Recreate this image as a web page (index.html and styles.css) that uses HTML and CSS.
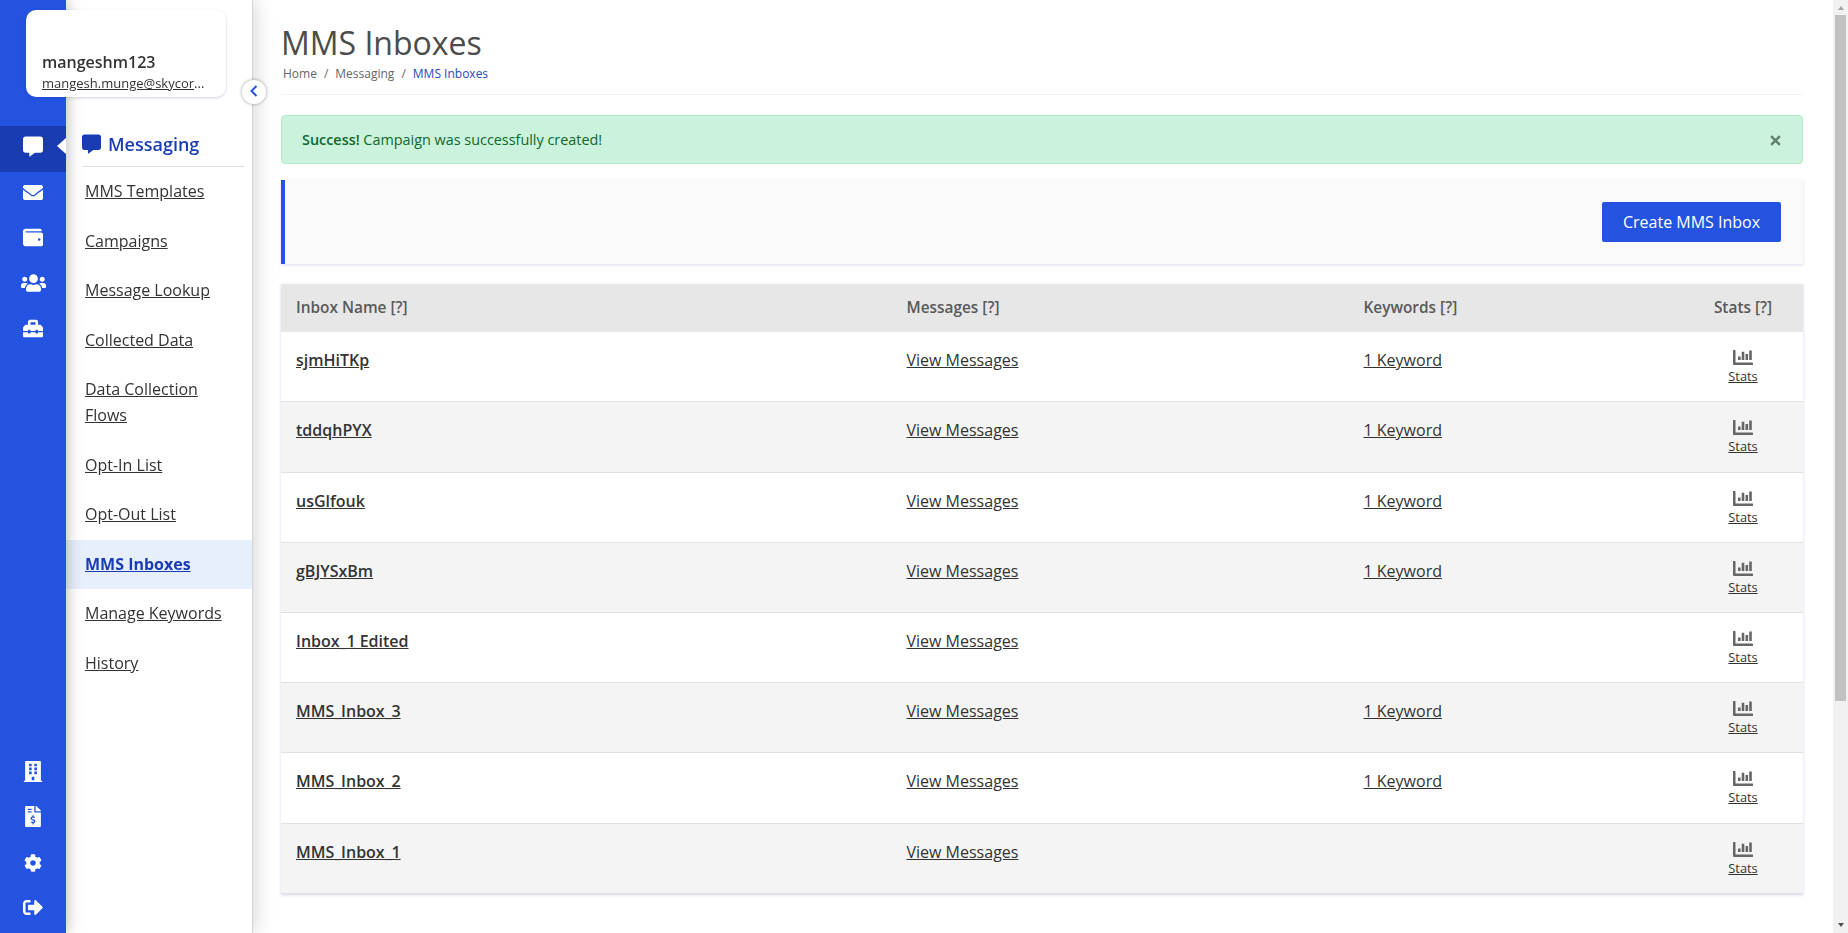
FILE: index.html
```html
<!DOCTYPE html>
<html lang="en">
<head>
<meta charset="utf-8">
<title>MMS Inboxes</title>
<link rel="stylesheet" href="styles.css">
</head>
<body>
<svg class="sprite" aria-hidden="true">
  <symbol id="message" viewBox="0 0 512 512"><path d="M448 0H64C28.7 0 0 28.7 0 64v288c0 35.3 28.7 64 64 64h96v84c0 9.8 11.2 15.5 19.1 9.7L304 416h144c35.3 0 64-28.7 64-64V64c0-35.3-28.7-64-64-64z"/></symbol>
  <symbol id="envelope" viewBox="0 0 512 512"><path d="M502.3 190.8c3.9-3.1 9.7-.2 9.7 4.7V400c0 26.5-21.5 48-48 48H48c-26.5 0-48-21.5-48-48V195.6c0-5 5.7-7.8 9.7-4.7 22.4 17.4 52.1 39.5 154.1 113.6 21.1 15.4 56.7 47.8 92.2 47.6 35.7.3 72-32.8 92.3-47.6 102-74.1 131.6-96.3 154-113.7zM256 320c23.2.4 56.6-29.2 73.4-41.4 132.7-96.3 142.8-104.7 173.4-128.7 5.8-4.5 9.2-11.5 9.2-18.9v-19c0-26.5-21.5-48-48-48H48c-26.5 0-48 21.5-48 48v19c0 7.4 3.4 14.3 9.2 18.9 30.6 23.9 40.7 32.4 173.4 128.7 16.8 12.2 50.2 41.8 73.4 41.4z"/></symbol>
  <symbol id="wallet" viewBox="0 0 512 512"><path d="M461.2 128H80c-8.84 0-16-7.16-16-16s7.16-16 16-16h384c8.84 0 16-7.16 16-16 0-26.51-21.49-48-48-48H64C28.65 32 0 60.65 0 96v320c0 35.35 28.65 64 64 64h397.2c28.02 0 50.8-21.53 50.8-48V176c0-26.47-22.78-48-50.8-48zM416 336c-17.67 0-32-14.33-32-32s14.33-32 32-32 32 14.33 32 32-14.33 32-32 32z"/></symbol>
  <symbol id="users" viewBox="0 0 640 512"><path d="M96 224c35.3 0 64-28.7 64-64s-28.7-64-64-64-64 28.7-64 64 28.7 64 64 64zm448 0c35.3 0 64-28.7 64-64s-28.7-64-64-64-64 28.7-64 64 28.7 64 64 64zm32 32h-64c-17.6 0-33.5 7.1-45.1 18.6 40.3 22.1 68.9 62 75.1 109.4h66c17.7 0 32-14.3 32-32v-32c0-35.3-28.7-64-64-64zm-256 0c61.9 0 112-50.1 112-112S381.9 32 320 32 208 82.1 208 144s50.1 112 112 112zm76.8 32h-8.3c-20.8 10-43.9 16-68.5 16s-47.6-6-68.5-16h-8.3C179.6 288 128 339.6 128 403.2V432c0 26.5 21.5 48 48 48h288c26.5 0 48-21.5 48-48v-28.8c0-63.6-51.6-115.2-115.2-115.2zm-223.7-13.4C161.5 263.1 145.6 256 128 256H64c-35.3 0-64 28.7-64 64v32c0 17.7 14.3 32 32 32h65.9c6.3-47.4 34.9-87.3 75.2-109.4z"/></symbol>
  <symbol id="toolbox" viewBox="0 0 512 512"><path d="M502.63 214.63l-45.25-45.25c-6-6-14.14-9.37-22.63-9.37H384V80c0-26.51-21.49-48-48-48H176c-26.51 0-48 21.49-48 48v80H77.25c-8.49 0-16.62 3.37-22.63 9.37L9.37 214.63c-6 6-9.37 14.14-9.37 22.63V320h128v-16c0-8.84 7.16-16 16-16h32c8.84 0 16 7.16 16 16v16h128v-16c0-8.84 7.16-16 16-16h32c8.84 0 16 7.16 16 16v16h128v-82.75c0-8.48-3.37-16.62-9.37-22.62zM320 160H192V96h128v64zm64 208c0 8.84-7.16 16-16 16h-32c-8.84 0-16-7.16-16-16v-16H192v16c0 8.84-7.16 16-16 16h-32c-8.84 0-16-7.16-16-16v-16H0v96c0 17.67 14.33 32 32 32h448c17.67 0 32-14.33 32-32v-96H384v16z"/></symbol>
  <symbol id="building" viewBox="0 0 448 512"><path fill-rule="evenodd" d="M436 480h-20V24c0-13.255-10.745-24-24-24H56C42.745 0 32 10.745 32 24v456H12c-6.627 0-12 5.373-12 12v20h448v-20c0-6.627-5.373-12-12-12zM128 64h64v64h-64zM256 64h64v64h-64zM128 160h64v64h-64zM256 160h64v64h-64zM128 256h64v64h-64zM256 256h64v64h-64zM192 384h64v88h-64z"/></symbol>
  <symbol id="invoice" viewBox="0 0 384 512"><path d="M377 105L279.1 7c-4.5-4.5-10.6-7-17-7H256v128h128v-6.1c0-6.3-2.5-12.4-7-16.9zm-153 31V0H24C10.7 0 0 10.7 0 24v464c0 13.3 10.7 24 24 24h336c13.3 0 24-10.7 24-24V160H248c-13.2 0-24-10.8-24-24zM64 72c0-4.42 3.58-8 8-8h80c4.42 0 8 3.58 8 8v16c0 4.42-3.58 8-8 8H72c-4.42 0-8-3.58-8-8V72zm0 80v-16c0-4.42 3.58-8 8-8h80c4.42 0 8 3.58 8 8v16c0 4.42-3.58 8-8 8H72c-4.42 0-8-3.58-8-8zm144 263.88V440c0 4.42-3.58 8-8 8h-16c-4.42 0-8-3.58-8-8v-24.29c-11.29-.58-22.27-4.52-31.37-11.35-3.9-2.93-4.1-8.77-.57-12.14l11.75-11.21c2.77-2.64 6.89-2.76 10.13-.73 3.87 2.42 8.26 3.72 12.82 3.72h28.11c6.5 0 11.8-5.92 11.8-13.19 0-5.95-3.61-11.19-8.77-12.73l-45-13.5c-18.59-5.58-31.58-23.42-31.58-43.39 0-24.52 19.05-44.44 42.67-45.07V232c0-4.42 3.58-8 8-8h16c4.42 0 8 3.58 8 8v24.29c11.29.58 22.27 4.51 31.37 11.35 3.9 2.93 4.1 8.77.57 12.14l-11.75 11.21c-2.77 2.64-6.89 2.76-10.13.73-3.87-2.43-8.26-3.72-12.82-3.72h-28.11c-6.5 0-11.8 5.92-11.8 13.19 0 5.95 3.61 11.19 8.77 12.73l45 13.5c18.59 5.58 31.58 23.42 31.58 43.39 0 24.53-19.05 44.44-42.67 45.07z"/></symbol>
  <symbol id="cog" viewBox="0 0 512 512"><path d="M487.4 315.7l-42.6-24.6c4.3-23.2 4.3-47 0-70.2l42.6-24.6c4.9-2.8 7.1-8.6 5.5-14-11.1-35.6-30-67.8-54.7-94.6-3.8-4.1-10-5.1-14.8-2.3L380.8 110c-17.9-15.4-38.5-27.3-60.8-35.1V25.8c0-5.6-3.9-10.5-9.4-11.7-36.7-8.2-74.3-7.8-109.2 0-5.5 1.2-9.4 6.1-9.4 11.7V75c-22.2 7.9-42.8 19.8-60.8 35.1L88.7 85.5c-4.9-2.8-11-1.9-14.8 2.3-24.7 26.7-43.6 58.9-54.7 94.6-1.7 5.4.6 11.2 5.5 14L67.3 221c-4.3 23.2-4.3 47 0 70.2l-42.6 24.6c-4.9 2.8-7.1 8.6-5.5 14 11.1 35.6 30 67.8 54.7 94.6 3.8 4.1 10 5.1 14.8 2.3l42.6-24.6c17.9 15.4 38.5 27.3 60.8 35.1v49.2c0 5.6 3.9 10.5 9.4 11.7 36.7 8.2 74.3 7.8 109.2 0 5.5-1.2 9.4-6.1 9.4-11.7v-49.2c22.2-7.9 42.8-19.8 60.8-35.1l42.6 24.6c4.9 2.8 11 1.9 14.8-2.3 24.7-26.7 43.6-58.9 54.7-94.6 1.5-5.5-.7-11.3-5.6-14.1zM256 336c-44.1 0-80-35.9-80-80s35.9-80 80-80 80 35.9 80 80-35.9 80-80 80z"/></symbol>
  <symbol id="logout" viewBox="0 0 512 512"><path d="M497 273L329 441c-15 15-41 4.5-41-17v-96H152c-13.3 0-24-10.7-24-24v-96c0-13.3 10.7-24 24-24h136V88c0-21.4 25.9-32 41-17l168 168c9.3 9.4 9.3 24.6 0 34zM192 436v-40c0-6.6-5.4-12-12-12H96c-17.7 0-32-14.3-32-32V160c0-17.7 14.3-32 32-32h84c6.600 0 12-5.400 12-12V76c0-6.600-5.400-12-12-12H96c-53 0-96 43-96 96v192c0 53 43 96 96 96h84c6.600 0 12-5.400 12-12z"/></symbol>
  <symbol id="chart" viewBox="0 0 20 15"><path d="M0 .5Q0 0 .5 0H2Q2.5 0 2.5.5V12.500H19.500Q20 12.500 20 13V14.500Q20 15 19.500 15H1Q0 15 0 14zM5 6.500h2.600v3.500H5zM8.700 1.800h2.600v8.200H8.700zM12.500 4h2.600v6h-2.600zM16.200 .5h2.600v9.500h-2.600z"/></symbol>
</svg>
<div class="app">
  <nav class="rail">
    <div class="rail-group">
      <a class="rail-item active"><svg><use href="#message"/></svg></a>
      <a class="rail-item"><svg><use href="#envelope"/></svg></a>
      <a class="rail-item raised"><svg><use href="#wallet"/></svg></a>
      <a class="rail-item"><svg class="wide"><use href="#users"/></svg></a>
      <a class="rail-item"><svg><use href="#toolbox"/></svg></a>
    </div>
    <div class="rail-group">
      <a class="rail-item"><svg><use href="#building"/></svg></a>
      <a class="rail-item"><svg><use href="#invoice"/></svg></a>
      <a class="rail-item lowered"><svg class="cog"><use href="#cog"/></svg></a>
      <a class="rail-item"><svg><use href="#logout"/></svg></a>
    </div>
  </nav>
  <aside class="panel">
    <h2 class="panel-title"><svg><use href="#message"/></svg>Messaging</h2>
    <ul class="menu">
      <li><a>MMS Templates</a></li>
      <li><a>Campaigns</a></li>
      <li><a>Message Lookup</a></li>
      <li><a>Collected Data</a></li>
      <li><a>Data Collection Flows</a></li>
      <li><a>Opt-In List</a></li>
      <li><a>Opt-Out List</a></li>
      <li class="current"><a>MMS Inboxes</a></li>
      <li><a>Manage Keywords</a></li>
      <li><a>History</a></li>
    </ul>
  </aside>
  <div class="account">
    <strong>mangeshm123</strong>
    <div class="mail"><a>mangesh.munge@skycor</a>...</div>
  </div>
  <button class="collapse"><svg viewBox="0 0 8 12"><path d="M6.500 1L1.500 6l5 5"/></svg></button>
  <main class="main">
    <h1>MMS Inboxes</h1>
    <div class="crumbs"><span>Home</span><i>/</i><span>Messaging</span><i>/</i><span class="here">MMS Inboxes</span></div>
    <div class="alert"><p><b>Success!</b> Campaign was successfully created!</p><svg class="close" viewBox="0 0 10 10"><path d="M1 1l8 8M9 1L1 9"/></svg></div>
    <div class="toolbar"><button class="create">Create MMS Inbox</button></div>
    <table class="inboxes">
      <colgroup><col class="c1"><col class="c2"><col class="c3"><col></colgroup>
      <thead><tr><th>Inbox Name [?]</th><th>Messages [?]</th><th>Keywords [?]</th><th class="stat">Stats [?]</th></tr></thead>
      <tbody>
        <tr><td class="name"><a>sjmHiTKp</a></td><td><a>View Messages</a></td><td><a>1 Keyword</a></td><td class="stat"><svg><use href="#chart"/></svg><a>Stats</a></td></tr>
        <tr><td class="name"><a>tddqhPYX</a></td><td><a>View Messages</a></td><td><a>1 Keyword</a></td><td class="stat"><svg><use href="#chart"/></svg><a>Stats</a></td></tr>
        <tr><td class="name"><a>usGlfouk</a></td><td><a>View Messages</a></td><td><a>1 Keyword</a></td><td class="stat"><svg><use href="#chart"/></svg><a>Stats</a></td></tr>
        <tr><td class="name"><a>gBJYSxBm</a></td><td><a>View Messages</a></td><td><a>1 Keyword</a></td><td class="stat"><svg><use href="#chart"/></svg><a>Stats</a></td></tr>
        <tr><td class="name"><a>Inbox_1 Edited</a></td><td><a>View Messages</a></td><td></td><td class="stat"><svg><use href="#chart"/></svg><a>Stats</a></td></tr>
        <tr><td class="name"><a>MMS_Inbox_3</a></td><td><a>View Messages</a></td><td><a>1 Keyword</a></td><td class="stat"><svg><use href="#chart"/></svg><a>Stats</a></td></tr>
        <tr><td class="name"><a>MMS_Inbox_2</a></td><td><a>View Messages</a></td><td><a>1 Keyword</a></td><td class="stat"><svg><use href="#chart"/></svg><a>Stats</a></td></tr>
        <tr><td class="name"><a>MMS_Inbox_1</a></td><td><a>View Messages</a></td><td></td><td class="stat"><svg><use href="#chart"/></svg><a>Stats</a></td></tr>
      </tbody>
    </table>
  </main>
  <div class="scrollbar"><i class="up"></i><div class="thumb"></div><i class="down"></i></div>
</div>
</body>
</html>
```
FILE: styles.css
```css
* { box-sizing: border-box; }
body { margin: 0; font: 16px/1.6 "Open Sans", "Noto Sans", sans-serif; color: #333; background: #fff; }
h1, h2, p, ul { margin: 0; padding: 0; }
ul { list-style: none; }
button { font: inherit; border: 0; }
.sprite { display: none; }
.app { position: relative; display: flex; height: 933px; overflow: hidden; }

.rail { width: 66px; padding: 126px 0 1px; background: #2353e0; color: #fff; display: flex; flex-direction: column; justify-content: space-between; box-shadow: 0 0 15px rgba(0,0,0,.3); z-index: 2; will-change: transform; }
.rail-item { position: relative; display: flex; align-items: center; justify-content: center; height: 45.400px; padding-bottom: 4px; }
.rail-item svg { width: 20px; height: 21px; fill: currentColor; }
.rail-item svg.wide { width: 25px; height: 20px; }
.rail-item svg.cog { height: 18px; width: 18px; }
.rail-item.raised { padding-bottom: 5.500px; }
.rail-item.lowered { padding-bottom: 2px; }
.rail-item.active { height: 46px; padding-bottom: 5px; background: #193cb3; }
.rail-item.active::after { content: ""; position: absolute; right: 0; top: 12px; border: 8.500px solid transparent; border-right: 9px solid #fff; border-left: 0; }

.panel { width: 187px; padding-top: 129px; background: #fff; border-right: 1px solid #d5d5d5; box-shadow: 0 0 20px rgba(0,0,0,.2); z-index: 1; will-change: transform; }
.panel-title { display: flex; align-items: center; gap: 7px; height: 38px; margin: 0 8px 0 16px; padding-bottom: 7px; border-bottom: 1px solid #dedede; font-size: 18px; font-weight: 600; color: #193cb3; }
.panel-title svg { width: 19px; height: 20px; fill: currentColor; }
.menu li { padding: 12px 19px; }
.menu a { text-decoration: underline; }
.menu .current { background: #e8effc; color: #193cb3; font-weight: 700; }

.account { position: absolute; z-index: 3; left: 26px; top: 10px; width: 200px; height: 87px; padding: 40px 16px 0; background: #fff; border-radius: 10px; box-shadow: 0 1px 3px rgba(35,35,160,.22); will-change: transform; }
.account strong { display: block; font-size: 16px; line-height: 24px; font-weight: 600; }
.mail { font-size: 13px; line-height: 19px; white-space: nowrap; }
.mail a { text-decoration: underline; }

.collapse { position: absolute; z-index: 4; left: 242px; top: 80px; width: 24px; height: 24px; padding: 0 1px 2px 0; border-radius: 50%; background: #fff; box-shadow: 0 0 3px 1px rgba(0,0,0,.22); display: flex; align-items: center; justify-content: center; }
.collapse svg { width: 8px; height: 12px; fill: none; stroke: #2353e0; stroke-width: 2; }

.main { flex: 1; padding: 20px 30px 0 28px; }
h1 { font-size: 32px; line-height: 46px; font-weight: 400; color: #4c4c4c; }
.crumbs { display: flex; gap: 7px; height: 29px; padding-left: 2px; border-bottom: 1px solid #f3f3f3; font-size: 12px; line-height: 15px; color: #666; }
.crumbs i { font-style: normal; }
.crumbs .here { color: #2748b8; }
.alert { display: flex; align-items: center; justify-content: space-between; height: 49px; margin-top: 20px; padding: 0 21px 0 20px; border: 1px solid #b4ebcb; border-radius: 4px; background: #caf2dc; color: #10672f; font-size: 14.400px; }
.alert p { padding-top: 1px; }
.alert b { font-weight: 600; }
.close { width: 11px; height: 11px; margin-top: 2px; fill: none; stroke: #647e6f; stroke-width: 2.200; }
.toolbar { display: flex; justify-content: flex-end; align-items: center; height: 84px; margin-top: 16px; padding: 0 22px 0 0; border-left: 4px solid #2353e0; background: #fafafa; box-shadow: 0 1px 3px rgba(40,40,160,.18); }
.create { width: 179px; height: 40px; padding: 1px 0 0; border-radius: 2px; background: #2353e0; color: #fff; }

.inboxes { width: 100%; margin-top: 20px; border-collapse: separate; border-spacing: 0; table-layout: fixed; box-shadow: 0 1px 3px rgba(40,40,160,.2); }
.c1 { width: 610.500px; }
.c2 { width: 457px; }
.c3 { width: 334.500px; }
th { height: 48.200px; padding: 0 15px 1px; background: #e7e7e7; color: #595959; font-size: 15.400px; font-weight: 600; text-align: left; line-height: 45px; }
td { height: 70.200px; padding: 16px 15px 0; vertical-align: top; border-bottom: 1px solid #dee2e6; }
tbody tr:nth-child(even) { background: #f4f4f4; }
td a { text-decoration: underline; }
.name { font-weight: 600; }
.stat { text-align: center; }
td.stat { padding-top: 18px; }
td.stat svg { display: block; width: 20px; height: 15px; margin: 0 auto; fill: #666; }
td.stat a { display: block; font-size: 12.800px; line-height: 22.500px; }

.scrollbar { width: 15px; background: #f1f1f1; display: flex; flex-direction: column; align-items: center; padding: 6px 0; }
.scrollbar i { border: 3.500px solid transparent; }
.scrollbar .up { border-top: 0; border-bottom: 4px solid #a3a3a3; }
.scrollbar .down { border-bottom: 0; border-top: 4px solid #505050; margin-top: auto; }
.thumb { width: 11px; height: 686px; margin-top: 5px; background: #c1c1c1; }
```
